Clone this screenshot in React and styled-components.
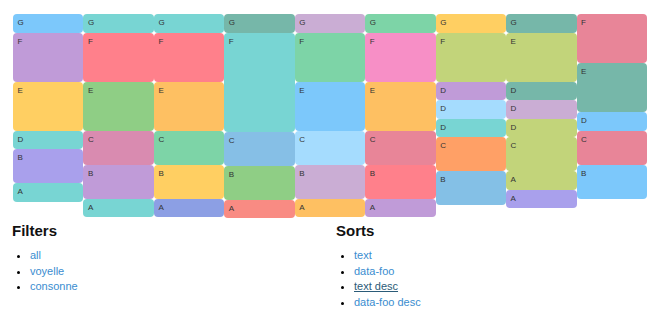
import React from "react"
import styled, { createGlobalStyle } from "styled-components"

const S = 18.5
const M = 34
const L = 49
const T = 99

const columns = [
    [["G", "#7cc8fb", S], ["F", "#c09bd8", L], ["E", "#ffcf62", L], ["D", "#78d5d3", S], ["B", "#a9a0ec", M], ["A", "#78d5d3", S]],
    [["G", "#78d5d3", S], ["F", "#ff808b", L], ["E", "#8fce85", L], ["C", "#d98bb0", M], ["B", "#c09bd8", M], ["A", "#78d5d3", S]],
    [["G", "#78d5d3", S], ["F", "#ff808b", L], ["E", "#fec062", L], ["C", "#7dd4a7", M], ["B", "#ffcf62", M], ["A", "#8c9fe4", S]],
    [["G", "#76b7a9", S], ["F", "#78d5d3", T], ["C", "#86bfe6", M], ["B", "#8fce85", M], ["A", "#f98b83", S]],
    [["G", "#caadd4", S], ["F", "#7dd4a7", L], ["E", "#7cc8fb", L], ["C", "#a5dcfe", M], ["B", "#caadd4", M], ["A", "#fec062", S]],
    [["G", "#7dd4a7", S], ["F", "#f78fc6", L], ["E", "#fec062", L], ["C", "#e88598", M], ["B", "#ff808b", M], ["A", "#c09bd8", S]],
    [["G", "#ffcf62", S], ["F", "#c2d47a", L], ["D", "#c09bd8", S], ["D", "#a5dcfe", S], ["D", "#78d5d3", S], ["C", "#ffa066", M], ["B", "#84c0e6", M]],
    [["G", "#76b7a9", S], ["E", "#c2d47a", L], ["D", "#76b7a9", S], ["D", "#caadd4", S], ["D", "#c2d47a", S], ["C", "#c2d47a", M], ["A", "#c2d47a", S], ["A", "#a9a0ec", S]],
    [["F", "#e88598", L], ["E", "#76b7a9", L], ["D", "#7cc8fb", S], ["C", "#e88598", M], ["B", "#7cc8fb", M]],
]

const filters = ["all", "voyelle", "consonne"]
const sorts = ["text", "data-foo", "text desc", "data-foo desc"]

export default function App() {
    return (
        <>
            <GlobalStyle />
            <Page>
                <Masonry>
                    {columns.map((col, i) => (
                        <Column key={i}>
                            {col.map(([letter, color, h], j) => (
                                <Tile key={j} $bg={color} $h={h}>{letter}</Tile>
                            ))}
                        </Column>
                    ))}
                </Masonry>
                <Controls>
                    <Group>
                        <Title>Filters</Title>
                        <List>
                            {filters.map((f) => <li key={f}><Link href="#">{f}</Link></li>)}
                        </List>
                    </Group>
                    <Group>
                        <Title>Sorts</Title>
                        <List>
                            {sorts.map((s) => (
                                <li key={s}><Link href="#" $active={s === "text desc"}>{s}</Link></li>
                            ))}
                        </List>
                    </Group>
                </Controls>
            </Page>
        </>
    )
}

const GlobalStyle = createGlobalStyle`
    body {
        margin: 0;
        background: #fff;
        font-family: "Liberation Sans", Arial, sans-serif;
    }
`
const Page = styled.div`
    padding: 14px 13px 0 13px;
`
const Masonry = styled.div`
    display: grid;
    grid-template-columns: repeat(9, 1fr);
    align-items: start;
`
const Column = styled.div`
    display: flex;
    flex-direction: column;
`
const Tile = styled.div`
    height: ${(p) => p.$h}px;
    background-color: ${(p) => p.$bg};
    border-radius: 4px;
    box-sizing: border-box;
    padding: 4px 0 0 4.5px;
    font-size: 8px;
    line-height: 9px;
    color: #333;
`
const Controls = styled.div`
    display: grid;
    grid-template-columns: 324px 1fr;
    margin-top: 4px;
    margin-left: -1px;
`
const Group = styled.div``
const Title = styled.h2`
    margin: 0 0 9px;
    font-size: 15px;
    font-weight: bold;
    color: #111;
`
const List = styled.ul`
    margin: 0;
    padding-left: 18px;
    font-size: 11px;
    line-height: 15.5px;
`
const Link = styled.a`
    color: ${(p) => (p.$active ? "#2b5b78" : "#3a8dd0")};
    text-decoration: ${(p) => (p.$active ? "underline" : "none")};
`
